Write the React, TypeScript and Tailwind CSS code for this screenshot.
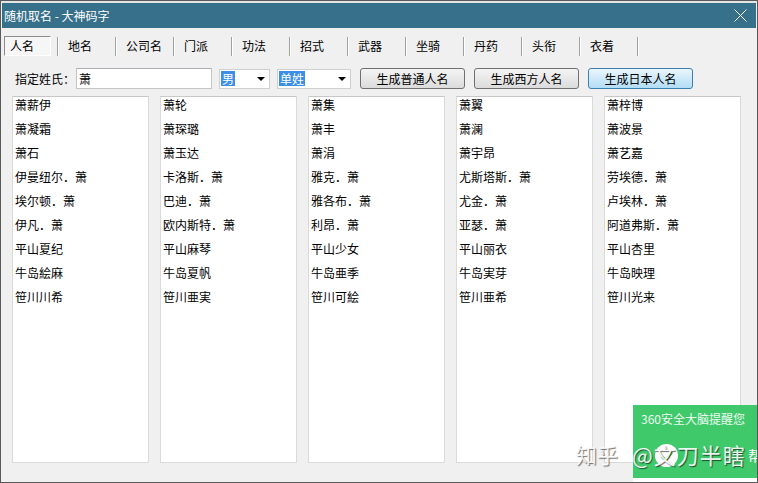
import React from "react";

const tabs = ["地名", "公司名", "门派", "功法", "招式", "武器", "坐骑", "丹药", "头衔", "衣着"];

const columns: string[][] = [
  ["萧薪伊", "萧凝霜", "萧石", "伊曼纽尔．萧", "埃尔顿．萧", "伊凡．萧", "平山夏纪", "牛岛絵麻", "笹川川希"],
  ["萧轮", "萧琛璐", "萧玉达", "卡洛斯．萧", "巴迪．萧", "欧内斯特．萧", "平山麻琴", "牛岛夏帆", "笹川亜実"],
  ["萧集", "萧丰", "萧涓", "雅克．萧", "雅各布．萧", "利昂．萧", "平山少女", "牛岛亜季", "笹川可絵"],
  ["萧翼", "萧澜", "萧宇昂", "尤斯塔斯．萧", "尤金．萧", "亚瑟．萧", "平山丽衣", "牛岛実芽", "笹川亜希"],
  ["萧梓博", "萧波景", "萧艺嘉", "劳埃德．萧", "卢埃林．萧", "阿道弗斯．萧", "平山杏里", "牛岛映理", "笹川光来"],
];

function Arrow() {
  return (
    <svg width="8" height="4" viewBox="0 0 8 4" className="shrink-0">
      <polygon points="0,0 8,0 4,4" fill="#000" />
    </svg>
  );
}

function Btn({ label, active }: { label: string; active?: boolean }) {
  return (
    <div
      className={
        active
          ? "w-[105px] h-[21px] rounded-[3px] border border-[#3c7fb1] bg-gradient-to-b from-[#eaf6fd] to-[#b2ddf5] flex items-center justify-center"
          : "w-[105px] h-[21px] rounded-[3px] border border-[#707070] bg-gradient-to-b from-[#f4f4f4] to-[#dcdcdc] flex items-center justify-center"
      }
    >
      {label}
    </div>
  );
}

export default function App() {
  return (
    <div className="w-[758px] h-[483px] relative overflow-hidden bg-[#f0f0f0] border border-[#5a5a5a] font-['Noto_Sans_CJK_SC',sans-serif] text-[12px] text-black leading-[16px] flex flex-col">
      <div className="h-[2px] bg-[#e4e4e4] shrink-0" />
      {/* title bar */}
      <div className="h-[25px] mx-[1px] bg-[#36708a] flex items-center justify-between pl-[2px] pr-[9px] shrink-0 text-white">
        <span className="text-[12px] whitespace-pre">随机取名 - 大神码字</span>
        <svg width="13" height="13" viewBox="0 0 13 13">
          <path d="M0.5 0.5 L12.5 12.5 M12.5 0.5 L0.5 12.5" stroke="#fff" strokeWidth="1" fill="none" />
        </svg>
      </div>

      {/* tabs */}
      <div className="mt-[8px] h-[20px] flex items-stretch shrink-0">
        <div className="ml-[3px] w-[47px] border-t border-l border-[#8c8c8c] border-b border-r border-b-white border-r-white bg-[#f6f6f6] flex items-center pl-[5px]">
          人名
        </div>
        <div className="w-[6px]" />
        {tabs.map((t) => (
          <div key={t} className="w-[58px] flex items-center">
            <div className="w-[1px] h-[19px] bg-[#a0a0a0]" />
            <div className="w-[1px] h-[19px] bg-white" />
            <span className="pl-[9px]">{t}</span>
          </div>
        ))}
        <div className="flex items-center">
          <div className="w-[1px] h-[19px] bg-[#a0a0a0]" />
          <div className="w-[1px] h-[19px] bg-white" />
        </div>
      </div>

      {/* form row */}
      <div className="mt-[12px] h-[21px] flex items-center shrink-0 pl-[14px]">
        <span className="w-[61px]">指定姓氏：</span>
        <div className="w-[136px] h-[21px] bg-white border border-[#c5c5c5] border-t-[#abadb3] flex items-center pl-[2px]">萧</div>
        <div className="ml-[7px] w-[51px] h-[20px] bg-white border border-[#d0d0d0] flex items-center justify-between pl-[1px] pr-[4px]">
          <span className="bg-[#3d8ee6] text-white px-[1px] leading-[15px]">男</span>
          <Arrow />
        </div>
        <div className="ml-[7px] w-[74px] h-[20px] bg-white border border-[#d0d0d0] flex items-center justify-between pl-[1px] pr-[4px]">
          <span className="bg-[#3d8ee6] text-white px-[1px] leading-[15px]">单姓</span>
          <Arrow />
        </div>
        <div className="ml-[9px] flex gap-[9px]">
          <Btn label="生成普通人名" />
          <Btn label="生成西方人名" />
          <Btn label="生成日本人名" active />
        </div>
      </div>

      {/* lists */}
      <div className="mt-[7px] h-[367px] flex gap-[11px] pl-[11px] shrink-0">
        {columns.map((col, i) => (
          <div key={i} className="w-[137px] h-full bg-white border border-[#dadada] border-t-[#c8c8c8] pl-[2px]">
            {col.map((n) => (
              <div key={n} className="h-[24px]">
                {n}
              </div>
            ))}
          </div>
        ))}
      </div>

      {/* 360 popup */}
      <div className="absolute left-[632px] top-[404px] w-[130px] h-[80px] flex flex-col">
        <div className="h-[73px] bg-[#3fc96b] text-white/90 pl-[8px] pt-[6px] text-[12px] relative">
          <div>360安全大脑提醒您</div>
          <div className="absolute left-[115px] top-[42px] text-[14px] text-white whitespace-nowrap">帮您</div>
        </div>
        <div className="flex-1 bg-white" />
      </div>

      {/* watermark */}
      <div className="absolute left-[654px] top-[443px] w-[23px] h-[23px] rounded-full bg-white flex items-center justify-center">
        <svg width="14" height="14" viewBox="0 0 14 14">
          <path d="M2 8 L6 11 L12 3" stroke="#3fc96b" strokeWidth="2.5" fill="none" />
        </svg>
      </div>
      <div className="absolute left-[575px] top-[439px] text-[21px] leading-[28px] text-white/85 [text-shadow:1px_1px_1px_rgba(0,0,0,0.55)] whitespace-nowrap">
        知乎
      </div>
      <div className="absolute left-[631px] top-[439px] text-[22px] leading-[28px] tracking-[1px] text-white/90 [text-shadow:1px_1px_1px_rgba(0,0,0,0.6)] whitespace-nowrap">
        @文刀半瞎
      </div>
    </div>
  );
}
